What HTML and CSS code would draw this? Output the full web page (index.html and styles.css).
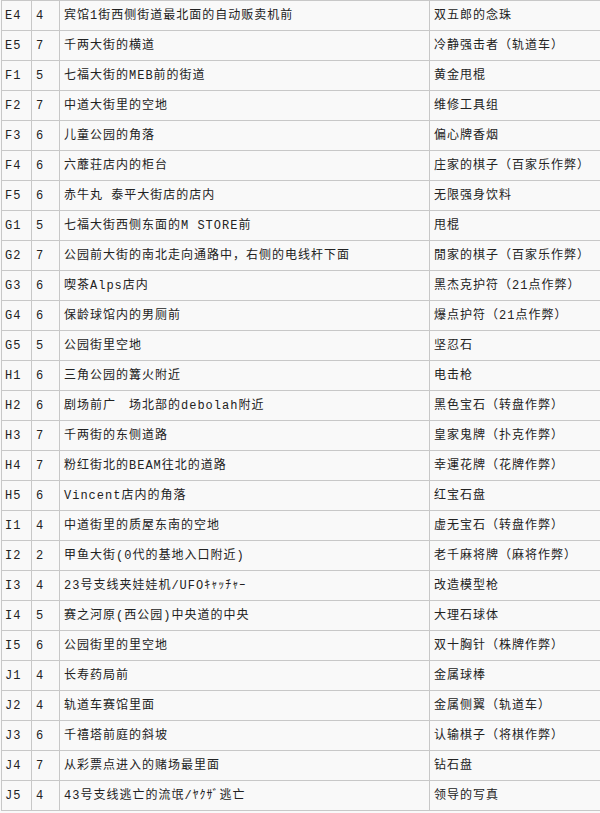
FILE: index.html
```html
<!DOCTYPE html>
<html lang="zh-CN">
<head>
<meta charset="utf-8">
<title>表</title>
<link rel="stylesheet" href="styles.css">
</head>
<body>
<div class="wrap">
<table class="list">
<colgroup><col class="c1"><col class="c2"><col class="c3"><col class="c4"></colgroup>
<tbody>
<tr><td>E4</td><td>4</td><td>宾馆1街西侧街道最北面的自动贩卖机前</td><td>双五郎的念珠</td></tr>
<tr><td>E5</td><td>7</td><td>千两大街的横道</td><td>冷静强击者（轨道车）</td></tr>
<tr><td>F1</td><td>5</td><td>七福大街的MEB前的街道</td><td>黄金甩棍</td></tr>
<tr><td>F2</td><td>7</td><td>中道大街里的空地</td><td>维修工具组</td></tr>
<tr><td>F3</td><td>6</td><td>儿童公园的角落</td><td>偏心牌香烟</td></tr>
<tr><td>F4</td><td>6</td><td>六蘼荘店内的柜台</td><td>庄家的棋子（百家乐作弊）</td></tr>
<tr><td>F5</td><td>6</td><td>赤牛丸 泰平大街店的店内</td><td>无限强身饮料</td></tr>
<tr><td>G1</td><td>5</td><td>七福大街西侧东面的M STORE前</td><td>甩棍</td></tr>
<tr><td>G2</td><td>7</td><td>公园前大街的南北走向通路中，右侧的电线杆下面</td><td>閒家的棋子（百家乐作弊）</td></tr>
<tr><td>G3</td><td>6</td><td>喫茶Alps店内</td><td>黑杰克护符（21点作弊）</td></tr>
<tr><td>G4</td><td>6</td><td>保龄球馆内的男厕前</td><td>爆点护符（21点作弊）</td></tr>
<tr><td>G5</td><td>5</td><td>公园街里空地</td><td>坚忍石</td></tr>
<tr><td>H1</td><td>6</td><td>三角公园的篝火附近</td><td>电击枪</td></tr>
<tr><td>H2</td><td>6</td><td>剧场前广　场北部的debolah附近</td><td>黑色宝石（转盘作弊）</td></tr>
<tr><td>H3</td><td>7</td><td>千两街的东侧道路</td><td>皇家鬼牌（扑克作弊）</td></tr>
<tr><td>H4</td><td>7</td><td>粉红街北的BEAM往北的道路</td><td>幸運花牌（花牌作弊）</td></tr>
<tr><td>H5</td><td>6</td><td>Vincent店内的角落</td><td>红宝石盘</td></tr>
<tr><td>I1</td><td>4</td><td>中道街里的质屋东南的空地</td><td>虚无宝石（转盘作弊）</td></tr>
<tr><td>I2</td><td>2</td><td>甲鱼大街(0代的基地入口附近)</td><td>老千麻将牌（麻将作弊）</td></tr>
<tr><td>I3</td><td>4</td><td>23号支线夹娃娃机/UFOｷｬｯﾁｬｰ</td><td>改造模型枪</td></tr>
<tr><td>I4</td><td>5</td><td>赛之河原(西公园)中央道的中央</td><td>大理石球体</td></tr>
<tr><td>I5</td><td>6</td><td>公园街里的里空地</td><td>双十胸针（株牌作弊）</td></tr>
<tr><td>J1</td><td>4</td><td>长寿药局前</td><td>金属球棒</td></tr>
<tr><td>J2</td><td>4</td><td>轨道车赛馆里面</td><td>金属侧翼（轨道车）</td></tr>
<tr><td>J3</td><td>6</td><td>千禧塔前庭的斜坡</td><td>认输棋子（将棋作弊）</td></tr>
<tr><td>J4</td><td>7</td><td>从彩票点进入的赌场最里面</td><td>钻石盘</td></tr>
<tr><td>J5</td><td>4</td><td>43号支线逃亡的流氓/ﾔｸｻﾞ逃亡</td><td>领导的写真</td></tr>
</tbody>
</table>
</div>
</body>
</html>
```
FILE: styles.css
```css
html, body {
  margin: 0;
  padding: 0;
  background: #f9f9f9;
  overflow: hidden;
}
.wrap {
  padding-left: 1px;
}
.list {
  border-collapse: collapse;
  table-layout: fixed;
  width: 599px;
  font-family: "Liberation Mono", "Noto Sans CJK SC", monospace;
  font-size: 12px;
  letter-spacing: 1px;
  color: #222;
}
.c1 { width: 30px; }
.c2 { width: 28px; }
.c3 { width: 370px; }
.c4 { width: 171px; }
.list td {
  border: 1px solid #c8c8c8;
  height: 29px;
  padding: 0 3px 0 4px;
  white-space: nowrap;
  overflow: hidden;
  vertical-align: middle;
  line-height: 14px;
}
.list td:first-child {
  padding-left: 3px;
}
.list td:last-child {
  border-right: none;
}
```
